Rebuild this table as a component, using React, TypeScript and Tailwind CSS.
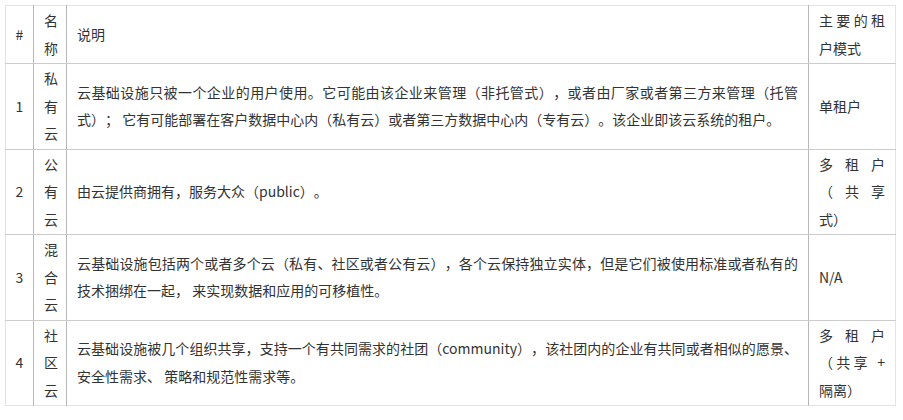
import React from "react";

const rows = [
  {
    n: "1",
    name: "私有云",
    desc: "云基础设施只被一个企业的用户使用。它可能由该企业来管理（非托管式），或者由厂家或者第三方来管理（托管式）； 它有可能部署在客户数据中心内（私有云）或者第三方数据中心内（专有云）。该企业即该云系统的租户。",
    mode: "单租户",
  },
  {
    n: "2",
    name: "公有云",
    desc: "由云提供商拥有，服务大众（public）。",
    mode: "多租户（共享式）",
  },
  {
    n: "3",
    name: "混合云",
    desc: "云基础设施包括两个或者多个云（私有、社区或者公有云），各个云保持独立实体，但是它们被使用标准或者私有的技术捆绑在一起， 来实现数据和应用的可移植性。",
    mode: "N/A",
  },
  {
    n: "4",
    name: "社区云",
    desc: "云基础设施被几个组织共享，支持一个有共同需求的社团（community），该社团内的企业有共同或者相似的愿景、安全性需求、 策略和规范性需求等。",
    mode: "多租户（共享 + 隔离）",
  },
];

export default function App() {
  const cell = "align-middle py-[1px] border-[#cccccc]";
  return (
    <div
      className="w-[903px] h-[420px] bg-white text-[#333333] text-[14px] leading-[27.5px] [text-spacing-trim:space-all] [font-feature-settings:'halt'_0]"
      style={{ fontFamily: '"Noto Sans CJK SC", "Noto Sans", sans-serif' }}
    >
      <div className="pt-[5px] pl-[5px]">
        <table className="border-collapse table-fixed w-[890px] border border-[#e3e3e3]">
          <colgroup>
            <col className="w-[28px]" />
            <col className="w-[33px]" />
            <col className="w-[742px]" />
            <col className="w-[87px]" />
          </colgroup>
          <thead>
            <tr>
              <th className={`${cell} font-normal text-center border-r border-r-[#b8b8b8] border-b`}>#</th>
              <th className={`${cell} font-normal text-center px-[10px] border-r border-r-[#b8b8b8] border-b`}>名称</th>
              <th className={`${cell} font-normal text-left px-[10px] border-r border-r-[#b8b8b8] border-b`}>说明</th>
              <th className={`${cell} font-normal text-justify px-[10px] border-b`}>主要的租户模式</th>
            </tr>
          </thead>
          <tbody>
            {rows.map((r, i) => (
              <tr key={r.n}>
                <td className={`${cell} text-center border-r border-r-[#b8b8b8] ${i < 3 ? "border-b" : ""}`}>{r.n}</td>
                <td className={`${cell} text-center px-[10px] border-r border-r-[#b8b8b8] ${i < 3 ? "border-b" : ""}`}>{r.name}</td>
                <td className={`${cell} text-justify px-[10px] border-r border-r-[#b8b8b8] ${i < 3 ? "border-b" : ""}`}>{r.desc}</td>
                <td className={`${cell} text-justify px-[10px] ${i < 3 ? "border-b" : ""}`}>{r.mode}</td>
              </tr>
            ))}
          </tbody>
        </table>
      </div>
    </div>
  );
}
